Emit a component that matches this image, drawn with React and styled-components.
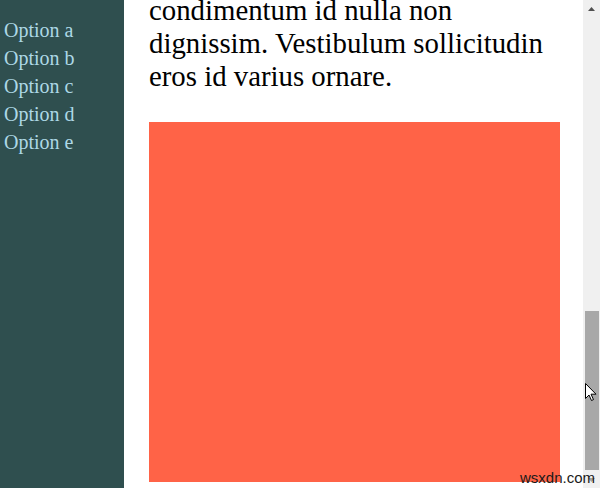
import React from 'react';
import styled, { createGlobalStyle } from 'styled-components';

const GlobalStyle = createGlobalStyle`
  html, body {
    margin: 0;
    padding: 0;
    overflow: hidden;
    background: #fff;
  }
`;

const Page = styled.div`
  position: relative;
  display: flex;
  height: 488px;
  width: 600px;
  font-family: "Liberation Serif", "Times New Roman", serif;
`;

const Sidebar = styled.nav`
  width: 124px;
  flex-shrink: 0;
  background: #2f4f4f;
  padding-top: 16px;
  box-sizing: border-box;
`;

const Option = styled.a`
  display: block;
  padding: 0 4px;
  font-size: 20px;
  line-height: 28px;
  color: #add8e6;
  text-decoration: none;
`;

const Main = styled.main`
  flex: 1;
  overflow: hidden;
  padding: 0 23px 0 25px;
`;

const Text = styled.p`
  margin: -6px 0 29px;
  font-size: 28.8px;
  color: #000;
`;

const Box = styled.div`
  height: 360px;
  background: ${({ color }) => color};
`;

const Scrollbar = styled.div`
  width: 17px;
  flex-shrink: 0;
  background: #f0f0f0;
  display: flex;
  flex-direction: column;
`;

const ArrowButton = styled.div`
  height: 17px;
  display: flex;
  align-items: center;
  justify-content: center;
  svg {
    display: block;
  }
`;

const Track = styled.div`
  flex: 1;
  display: flex;
  flex-direction: column;
  justify-content: flex-end;
  padding: 0 1px 1px 2px;
`;

const Thumb = styled.div`
  height: 159px;
  background: #a8a8a8;
`;

const Cursor = styled.svg`
  position: absolute;
  left: 585px;
  top: 383px;
`;

const Watermark = styled.span`
  position: absolute;
  right: 5px;
  bottom: 2px;
  font-family: "Liberation Sans", Arial, sans-serif;
  font-size: 15px;
  color: #1a1a1a;
`;

const options = ['a', 'b', 'c', 'd', 'e'];

export default function App() {
  return (
    <>
      <GlobalStyle />
      <Page>
        <Sidebar>
          {options.map(o => (
            <Option key={o} href="#">Option {o}</Option>
          ))}
        </Sidebar>
        <Main>
          <Text>
            condimentum id nulla non dignissim. Vestibulum sollicitudin eros id varius ornare.
          </Text>
          <Box color="#ff6347" />
        </Main>
        <Scrollbar>
          <ArrowButton>
            <svg width="7" height="4" viewBox="0 0 7 4">
              <path d="M0 4 L3.5 0 L7 4 Z" fill="#505050" />
            </svg>
          </ArrowButton>
          <Track>
            <Thumb />
          </Track>
          <ArrowButton>
            <svg width="7" height="4" viewBox="0 0 7 4">
              <path d="M0 0 L7 0 L3.5 4 Z" fill="#a3a3a3" />
            </svg>
          </ArrowButton>
        </Scrollbar>
        <Cursor width="12" height="19" viewBox="0 0 12 19">
          <path d="M0.5 0.5 L0.5 15.5 L4 12 L6.5 17.5 L8.5 16.6 L6 11.2 L11 11.2 Z" fill="#fff" stroke="#000" strokeWidth="1" />
        </Cursor>
        <Watermark>wsxdn.com</Watermark>
      </Page>
    </>
  );
}
